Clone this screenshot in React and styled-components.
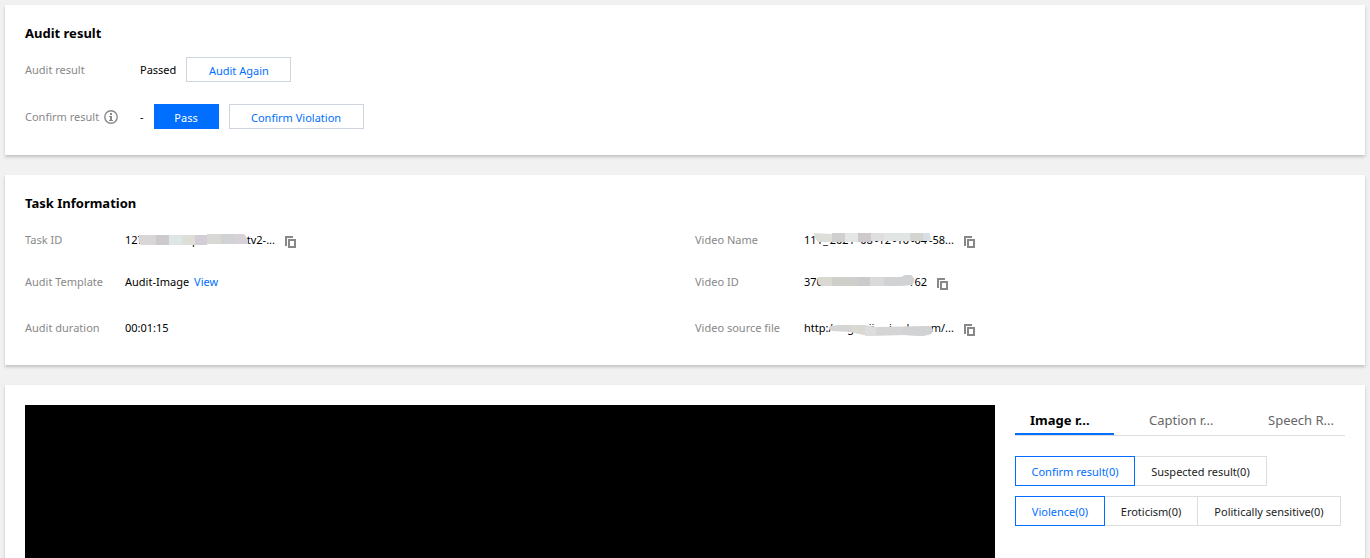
import React, { useState } from "react";
import styled, { createGlobalStyle, css } from "styled-components";

const GlobalStyle = createGlobalStyle`
  *, *::before, *::after { box-sizing: border-box; }
  body {
    margin: 0;
    background: #f1f1f1;
    color: #000;
    font: 11px/18px "Noto Sans", sans-serif;
  }
  button { font: inherit; cursor: pointer; }
  h2, dl, dd, dt { margin: 0; }
`;

const Page = styled.main`
  display: flex;
  flex-direction: column;
  gap: 20px;
  height: 100vh;
  padding: 5px 5px 0;
  overflow: hidden;
`;

const Card = styled.section`
  flex: none;
  padding: 20px;
  background: #fff;
  box-shadow: 0 2px 3px rgba(0, 0, 0, 0.2);
`;

const Title = styled.h2`
  font-size: 13px;
  line-height: 16px;
  font-weight: 700;
`;

const ResultList = styled.dl`
  display: flex;
  flex-direction: column;
  gap: 22px;
  padding: 16px 0 6px;
`;

const ResultRow = styled.div`
  display: flex;
  align-items: center;
  height: 25px;
`;

const Label = styled.dt`
  display: flex;
  align-items: center;
  gap: 5px;
  flex: none;
  width: ${(p) => p.$width}px;
  color: #888;
  white-space: nowrap;
`;

const Value = styled.dd`
  display: flex;
  align-items: center;
  gap: ${(p) => p.$gap || 10}px;
  white-space: nowrap;
`;

const Button = styled.button`
  height: 25px;
  min-width: ${(p) => p.$width}px;
  padding: 2px 10px 0;
  line-height: 21px;
  border: 1px solid #cfd5de;
  background: #fff;
  color: #006eff;
  ${(p) =>
    p.$primary &&
    css`
      border-color: #006eff;
      background: #006eff;
      color: #fff;
    `}
`;

const InfoGrid = styled.div`
  display: grid;
  grid-template-columns: 1fr 1fr;
  column-gap: 20px;
  padding: 18px 0 6px;
`;

const InfoColumn = styled.dl`
  display: grid;
  grid-template-rows: 42px 46px 22px;
`;

const InfoRow = styled.div`
  display: flex;
  align-items: flex-start;
  line-height: 22px;
`;

const Link = styled.a`
  color: #006eff;
  text-decoration: none;
`;

const IconButton = styled.button`
  display: flex;
  padding: 4px 0 0;
  border: 0;
  background: none;
  color: #888;
`;

const Redacted = styled.span`
  position: relative;
  display: flex;
  justify-content: space-between;
  width: ${(p) => p.$width}px;
`;

const Smudge = styled.svg`
  position: absolute;
  left: 0;
  top: 0;
`;

const Player = styled.div`
  flex: 1;
  background: #000;
`;

const ReviewCard = styled(Card)`
  display: flex;
  flex: 1;
  gap: 20px;
  padding-bottom: 0;
`;

const Side = styled.aside`
  flex: none;
  width: 330px;
`;

const TabList = styled.div`
  display: grid;
  grid-template-columns: 99px 99px 1fr;
  gap: 20px;
  height: 31px;
  margin-bottom: 20px;
  border-bottom: 1px solid #ddd;
`;

const Tab = styled.button`
  min-width: 0;
  padding: 2px 0 0 15px;
  border: 0;
  border-bottom: 2px solid ${(p) => (p.$active ? "#006eff" : "transparent")};
  background: none;
  color: ${(p) => (p.$active ? "#000" : "#666")};
  font-size: 13px;
  font-weight: ${(p) => (p.$active ? 700 : 400)};
  text-align: left;
  white-space: nowrap;
`;

const Segments = styled.div`
  display: flex;
  margin-bottom: 10px;
`;

const Segment = styled.button`
  position: relative;
  height: 30px;
  width: ${(p) => p.$width}px;
  padding: 2px 0 0;
  border: 1px solid ${(p) => (p.$active ? "#006eff" : "#ddd")};
  background: #fff;
  color: ${(p) => (p.$active ? "#006eff" : "#222")};
  white-space: nowrap;
  z-index: ${(p) => (p.$active ? 1 : 0)};
  & + & { margin-left: -1px; }
`;

const InfoIcon = () => (
  <svg width="14" height="14" viewBox="0 0 14 14" aria-hidden="true">
    <circle cx="7" cy="7" r="6.2" fill="none" stroke="#888" strokeWidth="1.4" />
    <path d="M6 3h2v2H6zM5 6h3v4h1v1H5v-1h1V7H5z" fill="#888" />
  </svg>
);

const CopyButton = () => (
  <IconButton type="button" aria-label="Copy">
    <svg width="11" height="12" viewBox="0 0 11 12">
      <path d="M0 0h8v2H2v8H0z" fill="currentColor" />
      <path d="M3 3h8v9H3zM5 5v5h4V5z" fill="currentColor" fillRule="evenodd" />
    </svg>
  </IconButton>
);

const TaskIdSmudge = () => (
  <Smudge width="150" height="22" aria-hidden="true">
    <path d="M14 6h18v10H16q-4-3-2-10z" fill="#d9d7d6" />
    <path d="M31 6h13v10H31z" fill="#cdcacd" />
    <path d="M44 6h13v10H44z" fill="#dee5e5" />
    <path d="M57 6h13v10H57z" fill="#deded9" />
    <path d="M70 6h12v10H70z" fill="#d5cdd5" />
    <path d="M82 5h14v10H82z" fill="#d8d8d5" />
    <path d="M96 5h13v10H96z" fill="#d1d2d4" />
    <path d="M109 5h10q4 3 4 10h-14z" fill="#d7d2d8" />
  </Smudge>
);

const VideoNameSmudge = () => (
  <Smudge width="150" height="22" aria-hidden="true">
    <path d="M10 4l18 1v8H14q-4-4-4-9z" fill="#deded9" />
    <path d="M28 4h13v9H28z" fill="#cfcfcf" />
    <path d="M41 4h13v9H41z" fill="#e3e8e7" />
    <path d="M54 4h13v9H54z" fill="#cdc9cd" />
    <path d="M67 4h13v8H67z" fill="#dedfde" />
    <path d="M80 4h26v8H80z" fill="#e1e6e4" />
    <path d="M106 4h13v8h-13z" fill="#d5d5d0" />
    <path d="M119 4h6q3 4 1 8h-7z" fill="#d8dee6" />
  </Smudge>
);

const VideoIdSmudge = () => (
  <Smudge width="130" height="22" aria-hidden="true">
    <path d="M14 6h14v9H17q-5-3-3-9z" fill="#d9d9d2" />
    <path d="M28 6h26v9H28z" fill="#cecfcb" />
    <path d="M54 6h12v9H54z" fill="#cbcbce" />
    <path d="M66 6h14v9H66z" fill="#dadada" />
    <path d="M80 6h17l4-2h6q6 4 1 10l-11 1H80z" fill="#d1d2d4" />
  </Smudge>
);

const SourceSmudge = () => (
  <Smudge width="150" height="22" aria-hidden="true">
    <path d="M26 9l8-1h26l12 2 54-1q5 4 1 8l-8 2-18-1-35 1-20-4-18-1q-5-2-2-5z" fill="#d5d5d5" />
    <path d="M47 8h13l1 1v9l-14-3z" fill="#d9d9d2" />
    <path d="M61 9l11 1v9H61z" fill="#ddd" />
    <path d="M99 10l27-1q5 4 1 8l-8 2-20-1z" fill="#d1d2d4" />
  </Smudge>
);

const tabs = ["Image r...", "Caption r...", "Speech R..."];
const results = [
  ["Confirm result(0)", 120],
  ["Suspected result(0)", 133],
];
const categories = [
  ["Violence(0)", 90],
  ["Eroticism(0)", 94],
  ["Politically sensitive(0)", 144],
];

function RedactedText({ parts, width, children }) {
  return (
    <Redacted $width={width}>
      {parts.map((part, i) => (
        <span key={i}>{part}</span>
      ))}
      {children}
    </Redacted>
  );
}

function SegmentGroup({ items, label }) {
  const [active, setActive] = useState(0);
  return (
    <Segments role="group" aria-label={label}>
      {items.map(([text, width], i) => (
        <Segment
          key={text}
          type="button"
          $width={width}
          $active={i === active}
          aria-pressed={i === active}
          onClick={() => setActive(i)}
        >
          {text}
        </Segment>
      ))}
    </Segments>
  );
}

export default function App() {
  const [tab, setTab] = useState(0);
  return (
    <Page>
      <GlobalStyle />
      <Card>
        <Title>Audit result</Title>
        <ResultList>
          <ResultRow>
            <Label $width={115}>Audit result</Label>
            <Value>
              Passed
              <Button type="button" $width={105}>Audit Again</Button>
            </Value>
          </ResultRow>
          <ResultRow>
            <Label $width={115}>
              Confirm result <InfoIcon />
            </Label>
            <Value>
              -
              <Button type="button" $width={65} $primary>Pass</Button>
              <Button type="button" $width={135}>Confirm Violation</Button>
            </Value>
          </ResultRow>
        </ResultList>
      </Card>

      <Card>
        <Title>Task Information</Title>
        <InfoGrid>
          <InfoColumn>
            <InfoRow>
              <Label $width={100}>Task ID</Label>
              <Value>
                <RedactedText width={150} parts={["127", "p", "tv2-..."]}>
                  <TaskIdSmudge />
                </RedactedText>
                <CopyButton />
              </Value>
            </InfoRow>
            <InfoRow>
              <Label $width={100}>Audit Template</Label>
              <Value $gap={5}>
                Audit-Image <Link href="#template">View</Link>
              </Value>
            </InfoRow>
            <InfoRow>
              <Label $width={100}>Audit duration</Label>
              <Value>00:01:15</Value>
            </InfoRow>
          </InfoColumn>
          <InfoColumn>
            <InfoRow>
              <Label $width={109}>Video Name</Label>
              <Value>
                <RedactedText
                  width={150}
                  parts={["111_", "2021", "-08", "-12", "-10", "-04", "-58..."]}
                >
                  <VideoNameSmudge />
                </RedactedText>
                <CopyButton />
              </Value>
            </InfoRow>
            <InfoRow>
              <Label $width={109}>Video ID</Label>
              <Value>
                <RedactedText width={123} parts={["370", "162"]}>
                  <VideoIdSmudge />
                </RedactedText>
                <CopyButton />
              </Value>
            </InfoRow>
            <InfoRow>
              <Label $width={109}>Video source file</Label>
              <Value>
                <RedactedText
                  width={150}
                  parts={["http:/", "g", "jj", "i", "l", "om/..."]}
                >
                  <SourceSmudge />
                </RedactedText>
                <CopyButton />
              </Value>
            </InfoRow>
          </InfoColumn>
        </InfoGrid>
      </Card>

      <ReviewCard>
        <Player role="img" aria-label="Video player" />
        <Side>
          <TabList role="tablist">
            {tabs.map((name, i) => (
              <Tab
                key={name}
                type="button"
                role="tab"
                aria-selected={i === tab}
                $active={i === tab}
                onClick={() => setTab(i)}
              >
                {name}
              </Tab>
            ))}
          </TabList>
          <SegmentGroup items={results} label="Result type" />
          <SegmentGroup items={categories} label="Category" />
        </Side>
      </ReviewCard>
    </Page>
  );
}
